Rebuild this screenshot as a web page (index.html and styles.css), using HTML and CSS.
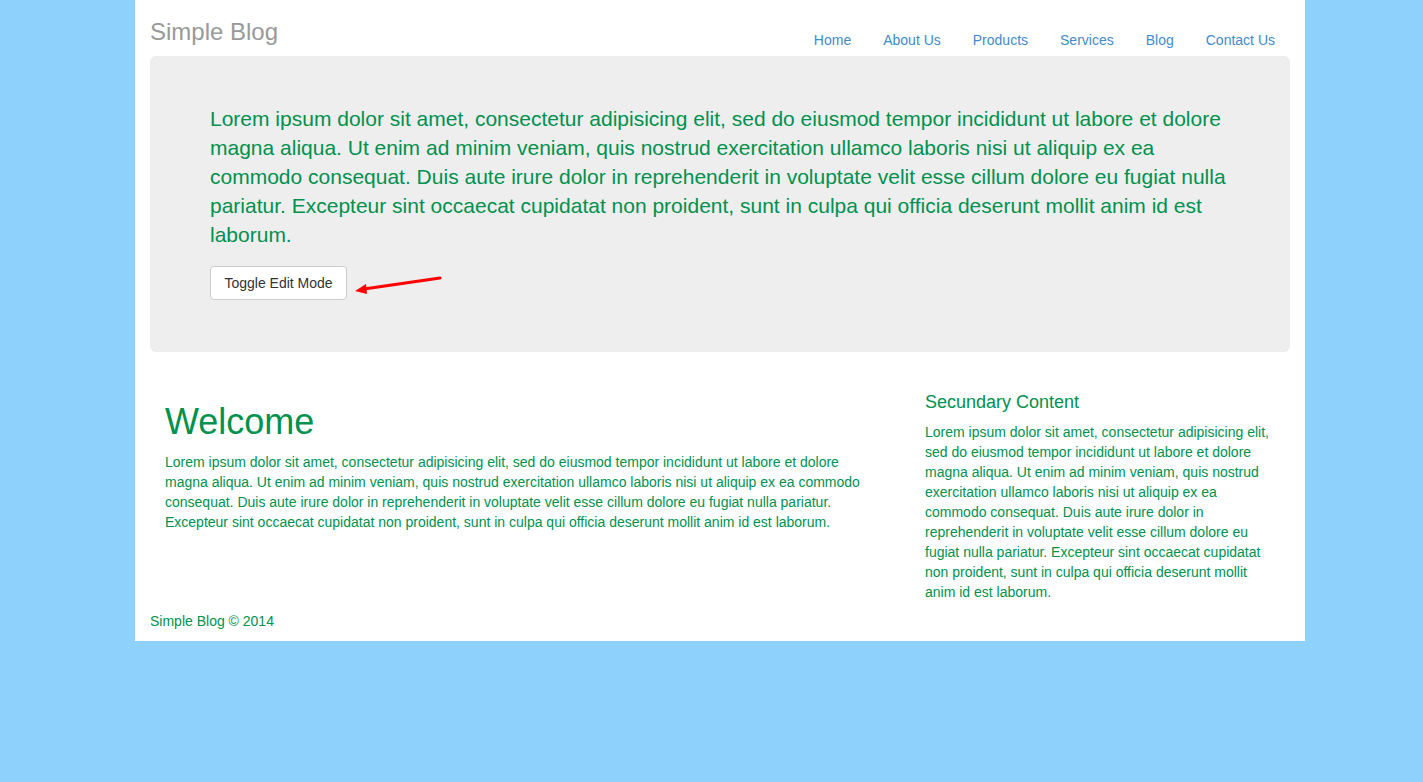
FILE: index.html
```html
<!DOCTYPE html>
<html lang="en">
<head>
<meta charset="utf-8">
<title>Simple Blog</title>
<link rel="stylesheet" href="styles.css">
</head>
<body>
<div class="container">
  <header class="header">
    <div class="brand">Simple Blog</div>
    <nav class="nav">
      <a href="#">Home</a>
      <a href="#">About Us</a>
      <a href="#">Products</a>
      <a href="#">Services</a>
      <a href="#">Blog</a>
      <a href="#">Contact Us</a>
    </nav>
  </header>
  <section class="jumbotron">
    <p class="lead">Lorem ipsum dolor sit amet, consectetur adipisicing elit, sed do eiusmod tempor incididunt ut labore et dolore magna aliqua. Ut enim ad minim veniam, quis nostrud exercitation ullamco laboris nisi ut aliquip ex ea commodo consequat. Duis aute irure dolor in reprehenderit in voluptate velit esse cillum dolore eu fugiat nulla pariatur. Excepteur sint occaecat cupidatat non proident, sunt in culpa qui officia deserunt mollit anim id est laborum.</p>
    <div class="btn-wrap">
      <button class="btn">Toggle Edit Mode</button>
      <svg class="arrow" width="100" height="24" viewBox="0 0 100 24">
        <line x1="88" y1="4" x2="12" y2="15" stroke="#ff0000" stroke-width="3" stroke-linecap="round"/>
        <polygon points="3,17 14,10 15,20" fill="#ff0000"/>
      </svg>
    </div>
  </section>
  <div class="content">
    <main class="main">
      <h1>Welcome</h1>
      <p>Lorem ipsum dolor sit amet, consectetur adipisicing elit, sed do eiusmod tempor incididunt ut labore et dolore magna aliqua. Ut enim ad minim veniam, quis nostrud exercitation ullamco laboris nisi ut aliquip ex ea commodo consequat. Duis aute irure dolor in reprehenderit in voluptate velit esse cillum dolore eu fugiat nulla pariatur. Excepteur sint occaecat cupidatat non proident, sunt in culpa qui officia deserunt mollit anim id est laborum.</p>
    </main>
    <aside class="side">
      <h4>Secundary Content</h4>
      <p>Lorem ipsum dolor sit amet, consectetur adipisicing elit, sed do eiusmod tempor incididunt ut labore et dolore magna aliqua. Ut enim ad minim veniam, quis nostrud exercitation ullamco laboris nisi ut aliquip ex ea commodo consequat. Duis aute irure dolor in reprehenderit in voluptate velit esse cillum dolore eu fugiat nulla pariatur. Excepteur sint occaecat cupidatat non proident, sunt in culpa qui officia deserunt mollit anim id est laborum.</p>
    </aside>
  </div>
  <footer class="footer">Simple Blog © 2014</footer>
</div>
</body>
</html>
```
FILE: styles.css
```css
html, body {
  margin: 0;
  padding: 0;
}
body {
  background: #8ed1fc;
  font-family: "Liberation Sans", Arial, sans-serif;
  font-size: 14px;
  line-height: 20px;
  color: #00914f;
}
.container {
  width: 1140px;
  margin-left: 135px;
  padding: 0 15px;
  background: #fff;
}
.header {
  display: flex;
  justify-content: space-between;
  height: 56px;
}
.brand {
  margin-top: 19px;
  font-size: 24px;
  line-height: 26px;
  color: #999;
}
.nav {
  display: flex;
  margin-top: 30px;
  padding-right: 15px;
}
.nav a {
  color: #428bca;
  text-decoration: none;
  line-height: 20px;
  margin-left: 32px;
}
.jumbotron {
  background: #eee;
  border-radius: 6px;
  padding: 48px 60px 52px;
  margin-bottom: 30px;
}
.lead {
  margin: 0 0 17px;
  font-size: 21px;
  line-height: 29px;
  color: #00914f;
}
.btn-wrap {
  position: relative;
  display: flex;
}
.btn {
  font-family: "Liberation Sans", Arial, sans-serif;
  font-size: 14px;
  line-height: 20px;
  color: #333;
  background: #fff;
  border: 1px solid #ccc;
  border-radius: 4px;
  padding: 6px 13px;
  height: 34px;
  width: 137px;
}
.arrow {
  position: absolute;
  left: 142px;
  top: 8px;
}
.content {
  display: flex;
}
.main {
  width: 712px;
  padding: 0 33px 0 15px;
}
.side {
  width: 350px;
  padding: 0 15px;
}
.main h1 {
  margin: 20px 0 10px;
  font-size: 36px;
  line-height: 40px;
  font-weight: normal;
}
.main p, .side p {
  margin: 0 0 10px;
}
.side h4 {
  margin: 10px 0 10px;
  font-size: 18px;
  line-height: 20px;
  font-weight: normal;
}
.footer {
  padding: 0 0 10px;
  line-height: 20px;
  margin-top: -1px;
}
```
